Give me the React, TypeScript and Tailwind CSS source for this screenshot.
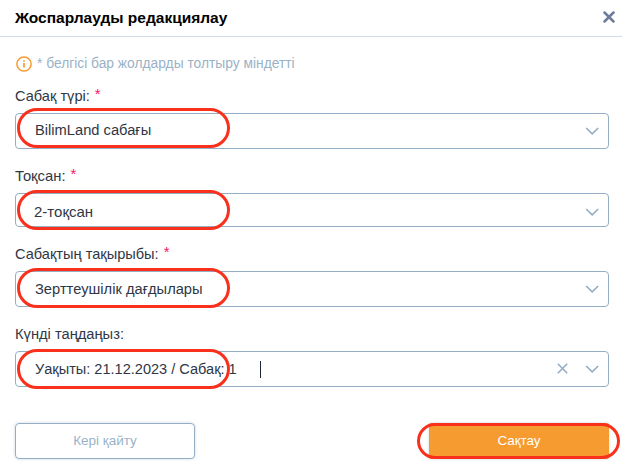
import { clsx } from 'clsx';

type FieldProps = {
  label: string;
  labelClass: string;
  value: string;
  valueClass: string;
  boxClass: string;
  ringClass: string;
  chevronClass?: string;
  required?: boolean;
  active?: boolean;
};

function Chevron({ className }: { className?: string }) {
  return <svg className={clsx('h-2 w-[14px] shrink-0', className)} viewBox="0 0 14 8" fill="none" stroke="#94adc4" strokeWidth="1.6">
    <path d="M1.2 1l6 5.8L13.2 1" />
  </svg>
}

function Ring({ className }: { className: string }) {
  return <span className={clsx('pointer-events-none absolute rounded-full border-[3px] border-[#f8301c]', className)} />
}

function Field({ label, labelClass, value, valueClass, boxClass, ringClass, chevronClass, required, active }: FieldProps) {
  return <div>
    <div className={clsx('flex whitespace-nowrap leading-5', labelClass)}>
      <span>{label}</span>
      {required && <span className="-mt-[2px] ml-[5px] text-[15px] text-[#fb1465]">*</span>}
    </div>
    <div className={clsx('relative flex items-center rounded-[4px] border border-[#94aec5] pr-[9px]', boxClass)}>
      <span className={clsx('whitespace-nowrap leading-5', valueClass)}>{value}</span>
      {active && <span className="ml-[23px] h-[17px] w-px bg-[#202838]" />}
      <span className="flex-1" />
      {active && <svg className="-mt-[2px] mr-[17px] size-[11px]" viewBox="0 0 11 11" fill="none" stroke="#94adc4" strokeWidth="1.6">
        <path d="M.8.8l9.4 9.4M10.2.8L.8 10.2" />
      </svg>}
      <Chevron className={chevronClass} />
      <Ring className={ringClass} />
    </div>
  </div>
}

export default function App() {
  return <div className="h-[473px] w-[622px] overflow-hidden bg-white font-['Liberation_Sans',Arial,sans-serif] text-[#2f3746]">
    <header className="flex h-[37px] items-center justify-between border-b border-[#d3dce6] pr-[7px] pl-[15px]">
      <h1 className="text-[15.5px] font-bold whitespace-nowrap text-black">Жоспарлауды редакциялау</h1>
      <svg className="-mt-[2px] size-[12px]" viewBox="0 0 12 12" fill="none" stroke="#6c7c9a" strokeWidth="2.5" strokeLinecap="round">
        <path d="M1.5 1.5l9 9M10.5 1.5l-9 9" />
      </svg>
    </header>

    <main className="px-[15px] pr-[13px] pt-[18px]">
      <div className="flex h-[17px] items-center">
        <svg className="ml-px size-4" viewBox="0 0 16 16" fill="none" stroke="#f59a2f" strokeWidth="1.5">
          <circle cx="8" cy="8" r="7.1" />
          <path d="M8 7v4.5M8 4.2v1.6" strokeWidth="1.7" />
        </svg>
        <p className="ml-[5px] text-[13.8px] leading-5 whitespace-nowrap text-[#9ab2c7]">* белгісі бар жолдарды толтыру міндетті</p>
      </div>

      <Field label="Сабақ түрі:" labelClass="mt-[14px] h-[27px] text-[14.6px]" value="BilimLand сабағы" valueClass="-mt-[2px] ml-[19px] text-[14.7px]"
        boxClass="h-[36px]" ringClass="-top-[6px] left-px h-[40px] w-[213px]" required />
      <Field label="Тоқсан:" labelClass="mt-[17px] h-[27px] text-[14.8px]" value="2-тоқсан" valueClass="ml-[18px] mt-[3px] text-[15px]"
        boxClass="h-[34px]" chevronClass="mt-[3px]" ringClass="-top-[4px] left-px h-[40px] w-[213px]" required />
      <Field label="Сабақтың тақырыбы:" labelClass="mt-[17px] h-[27px] text-[14.6px]" value="Зерттеушілік дағдылары" valueClass="ml-[19px] text-[14.7px]"
        boxClass="h-[36px]" ringClass="-top-[4px] left-px h-[40px] w-[213px]" required />
      <Field label="Күнді таңдаңыз:" labelClass="mt-[17px] h-[27px] text-[14.7px]" value="Уақыты: 21.12.2023 / Сабақ: 1" valueClass="ml-[19px] text-[14.55px]"
        boxClass="h-[36px]" ringClass="-top-[3px] left-px h-[40px] w-[213px]" active />

      <div className="mt-9 flex justify-between">
        <button className="h-9 w-[180px] rounded-[4px] border border-[#94aec5] text-[13.5px] text-[#9ab2c7] shadow-[0_0_3px_#94aec580]">Кері қайту</button>
        <button className="relative h-9 w-[180px] rounded-[2px] bg-[#f59b30] text-[13.4px] text-white shadow-[0_0_3px_#94aec580]">
          Сақтау
          <Ring className="-left-[12px] top-0 h-[36px] w-[203px]" />
        </button>
      </div>
    </main>
  </div>
}
